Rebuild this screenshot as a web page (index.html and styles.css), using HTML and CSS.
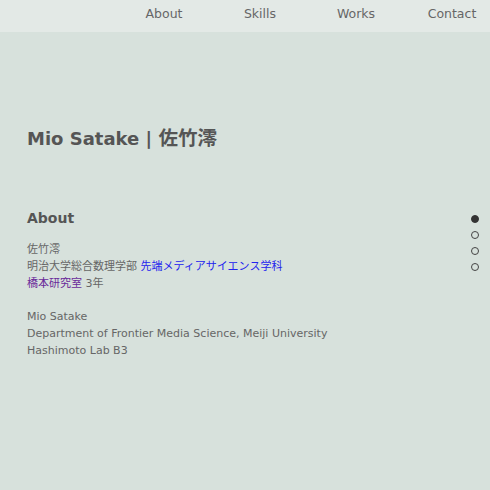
FILE: index.html
```html
<!DOCTYPE html>
<html lang="ja">
<head>
<meta charset="utf-8">
<link rel="stylesheet" href="styles.css">
</head>
<body>
<header class="header">
  <nav class="nav">
    <a class="nav-item" href="#about">About</a>
    <a class="nav-item" href="#skills">Skills</a>
    <a class="nav-item" href="#works">Works</a>
    <a class="nav-item" href="#contact">Contact</a>
  </nav>
</header>
<main class="main">
  <h1 class="title">Mio Satake | <span class="ja">佐竹澪</span></h1>
  <section class="about" id="about">
    <h2 class="heading">About</h2>
    <p class="text">佐竹澪<br>明治大学総合数理学部 <a class="link" href="#fms">先端メディアサイエンス学科</a><br><a class="link visited" href="#lab">橋本研究室</a> 3年</p>
    <p class="text">Mio Satake<br>Department of Frontier Media Science, Meiji University<br>Hashimoto Lab B3</p>
  </section>
</main>
<ul class="dots">
  <li class="dot active"></li>
  <li class="dot"></li>
  <li class="dot"></li>
  <li class="dot"></li>
</ul>
</body>
</html>
```

FILE: styles.css
```css
html, body {
  margin: 0;
  padding: 0;
}
body {
  background: #d7e1dc;
  font-family: "DejaVu Sans", "Noto Sans CJK JP", sans-serif;
  color: #666;
  width: 490px;
  height: 490px;
  overflow: hidden;
}
.header {
  background: #e3e9e6;
  height: 32px;
  display: flex;
  justify-content: flex-end;
}
.nav {
  display: flex;
  gap: 20px;
}
.nav-item {
  width: 76px;
  text-align: center;
  line-height: 27px;
  font-size: 12.5px;
  color: #666;
  text-decoration: none;
}
.main {
  padding: 0 27px;
}
.title {
  margin: 0;
  padding-top: 94px;
  font-size: 18px;
  line-height: 26px;
  color: #555;
  font-weight: bold;
}
.ja {
  font-size: 19.5px;
}
.about {
  padding-top: 55px;
}
.heading {
  margin: 0 0 12px;
  font-size: 14px;
  line-height: 22px;
  color: #555;
  font-weight: bold;
}
.text {
  margin: 0 0 16px;
  font-size: 11px;
  line-height: 17px;
}
.link {
  color: #2323ee;
  text-decoration: none;
}
.link.visited {
  color: #6a2a9a;
}
.dots {
  position: fixed;
  right: 11px;
  top: 215px;
  margin: 0;
  padding: 0;
  list-style: none;
  display: flex;
  flex-direction: column;
  gap: 8px;
}
.dot {
  width: 6px;
  height: 6px;
  border: 1px solid #444;
  border-radius: 50%;
}
.dot.active {
  background: #333;
  border-color: #333;
}
```
